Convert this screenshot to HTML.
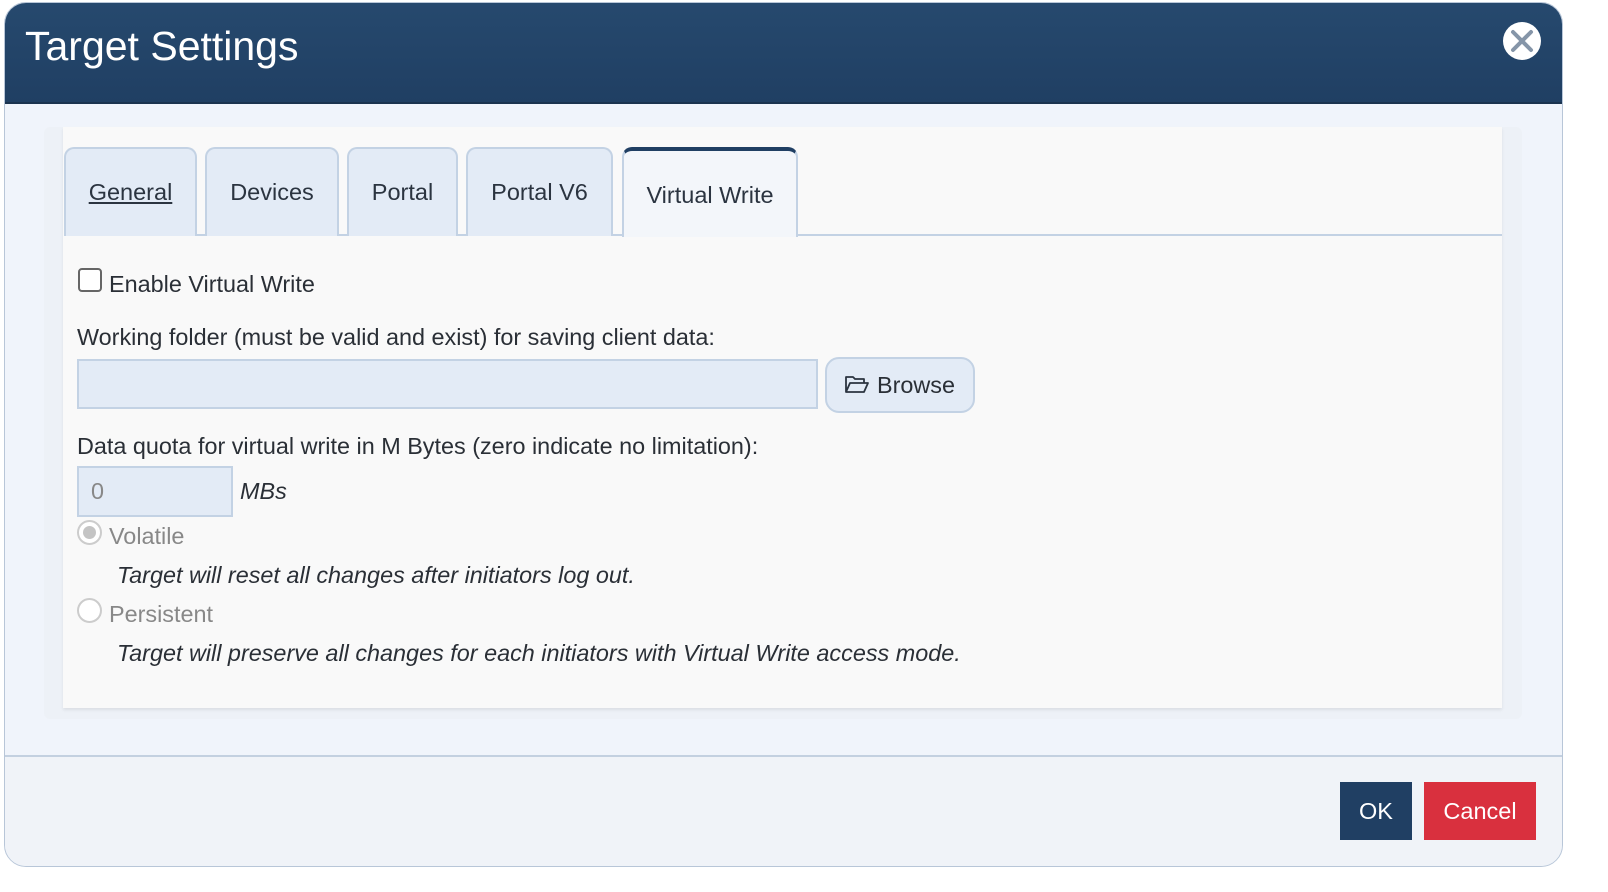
<!DOCTYPE html>
<html><head><style>
*{box-sizing:border-box;margin:0;padding:0}
body{width:1608px;height:892px;background:#fff;font-family:"Liberation Sans",sans-serif;position:relative;overflow:hidden;color:#222}
.a{position:absolute}
.dlg{left:4px;top:2px;width:1559px;height:865px;border:1px solid #b8c6d8;border-radius:22px;background:#f0f4fb;overflow:hidden}
.hdr{left:0;top:0;width:100%;height:101px;background:linear-gradient(#26496e,#203f63);border-bottom:2px solid #1b334f}
.tab{top:147px;height:89px;background:#e3ebf6;border:2px solid #c3d2e4;border-bottom:none;border-radius:10px 10px 0 0;font-size:23.5px;color:#2b3440;text-align:center;line-height:86px}
.t{font-size:23.4px;color:#2a2f36;white-space:nowrap}
.i{font-style:italic}
</style></head><body>
<div class="a dlg">
 <div class="a hdr"></div>
 <div class="a" style="left:20px;top:20px;font-size:41px;color:#fff">Target Settings</div>
 <div class="a" style="left:0;top:752px;width:100%;height:2px;background:#c3d0e0"></div>
 <div class="a" style="left:0;top:754px;width:100%;height:120px;background:#f0f3f8"></div>
</div>
<svg class="a" style="left:1502px;top:21px" width="40" height="40" viewBox="0 0 40 40"><circle cx="20" cy="20" r="19" fill="#fff"/><path d="M11 11L29 29M29 11L11 29" stroke="#8595a8" stroke-width="4" stroke-linecap="round"/></svg>
<div class="a" style="left:44px;top:127px;width:1478px;height:592px;background:#edf1f7;border-radius:6px"></div>
<div class="a" style="left:63px;top:127px;width:1439px;height:581px;background:#f9f9f9;box-shadow:0 2px 3px rgba(0,0,0,.08)"></div>
<div class="a" style="left:64px;top:234px;width:1438px;height:2px;background:#c3d2e4"></div>
<div class="a tab" style="left:64px;width:133px"><span style="text-decoration:underline">General</span></div>
<div class="a tab" style="left:205px;width:134px">Devices</div>
<div class="a tab" style="left:347px;width:111px">Portal</div>
<div class="a tab" style="left:466px;width:147px">Portal V6</div>
<div class="a tab" style="left:622px;width:176px;background:#f3f6fa;border-top:4px solid #203f63;height:90px;line-height:88px">Virtual Write</div>
<div class="a" style="left:78px;top:268px;width:24px;height:24px;border:2px solid #666;border-radius:4px;background:#fff"></div>
<div class="a t" style="left:109px;top:271px">Enable Virtual Write</div>
<div class="a t" style="left:77px;top:324px">Working folder (must be valid and exist) for saving client data:</div>
<div class="a" style="left:77px;top:359px;width:741px;height:50px;background:#e3ebf6;border:2px solid #c3d2e4"></div>
<div class="a" style="left:825px;top:357px;width:150px;height:56px;background:#e3ebf6;border:2px solid #c3d2e4;border-radius:14px"></div>
<svg class="a" style="left:844px;top:374px" width="26" height="20" viewBox="0 0 26 20"><path d="M2 18V3h7l2 2h9v4M2 18l4-9h18l-4 9z" fill="none" stroke="#2b3440" stroke-width="1.8" stroke-linejoin="round"/></svg>
<div class="a t" style="left:877px;top:372px">Browse</div>
<div class="a t" style="left:77px;top:433px">Data quota for virtual write in M Bytes (zero indicate no limitation):</div>
<div class="a" style="left:77px;top:466px;width:156px;height:51px;background:#e3ebf6;border:2px solid #c3d2e4"></div>
<div class="a t" style="left:91px;top:478px;color:#888">0</div>
<div class="a t i" style="left:240px;top:478px">MBs</div>
<div class="a" style="left:77px;top:520px;width:25px;height:25px;border:2px solid #ccc;border-radius:50%;background:#fff"><div class="a" style="left:4px;top:4px;width:13px;height:13px;border-radius:50%;background:#c4c4c4"></div></div>
<div class="a t" style="left:109px;top:523px;color:#888">Volatile</div>
<div class="a t i" style="left:117px;top:562px">Target will reset all changes after initiators log out.</div>
<div class="a" style="left:77px;top:598px;width:25px;height:25px;border:2px solid #ccc;border-radius:50%;background:#fff"></div>
<div class="a t" style="left:109px;top:601px;color:#888">Persistent</div>
<div class="a t i" style="left:117px;top:640px">Target will preserve all changes for each initiators with Virtual Write access mode.</div>
<div class="a" style="left:1340px;top:782px;width:72px;height:58px;background:#203f63;color:#fff;font-size:23.5px;text-align:center;line-height:58px">OK</div>
<div class="a" style="left:1424px;top:782px;width:112px;height:58px;background:#d9303e;color:#fff;font-size:23.5px;text-align:center;line-height:58px">Cancel</div>
</body></html>
